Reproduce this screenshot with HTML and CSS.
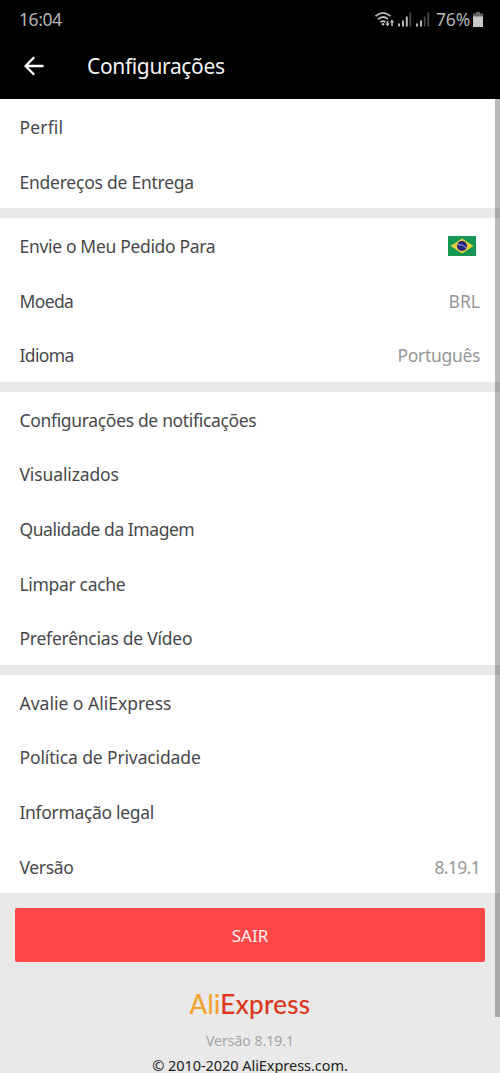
FILE: index.html
```html
<!DOCTYPE html>
<html lang="pt-BR">
<head>
<meta charset="utf-8">
<meta name="viewport" content="width=device-width, initial-scale=1">
<title>Configurações</title>
<link rel="stylesheet" href="styles.css">
</head>
<body>
<header class="top">
  <div class="status">
    <span class="clock">16:04</span>
    <div class="indicators">
      <svg class="wifi" width="20" height="17" viewBox="0 0 20 17" fill="none" stroke="#c0c0c0" stroke-width="1.7">
        <path d="M.5 5.200Q8 -1.600 15.500 5.200M3 8.300Q8 3.800 13 8.100M5.500 11.300Q8 9 10.300 11.300"/>
        <circle cx="8" cy="13.300" r="1.200" fill="#c0c0c0" stroke="none"/>
        <path d="M12.500 10v3M17 15v-4" stroke-width="1.500"/>
        <path d="M10.300 12.500h4.400l-2.200 3zM14.800 11.500h4.400L17 8.500z" fill="#c0c0c0" stroke="none"/>
      </svg>
      <svg class="signal" width="14" height="15" viewBox="0 0 14 15" fill="#b8b8b8">
        <path d="M0 11.500h2v3H0zM4 8.500h2v6H4zM7.800 4.500h2v10h-2z"/><path d="M11.400 .5h1.800v14h-1.800z" fill="#484848"/>
      </svg>
      <svg class="signal" width="14" height="15" viewBox="0 0 14 15" fill="#b8b8b8">
        <path d="M0 11.500h2v3H0zM4 8.500h2v6H4z"/><path d="M7.800 4.500h1.800v10H7.800zM11.400 .5h1.800v14h-1.800z" fill="#484848"/>
      </svg>
      <span class="percent">76%</span>
      <svg class="battery" width="10" height="15" viewBox="0 0 11 15" preserveAspectRatio="none">
        <path d="M3.300 0h4.400v1.500H11V5H0V1.500h3.300z" fill="#656565"/><path d="M0 4.500h11V15H0z" fill="#c8c8c8"/>
      </svg>
    </div>
  </div>
  <div class="bar">
    <svg class="back" width="20" height="20" viewBox="0 0 20 20" fill="none" stroke="#fff" stroke-width="2.300"><path d="M19.500 10H1.800M10.200 1.200L1.500 10l8.700 8.800"/></svg>
    <h1 class="title">Configurações</h1>
  </div>
</header>
<main class="content">
  <section class="group">
    <div class="row"><span class="wide">Perfil</span></div>
    <div class="row"><span class="snug">Endereços de Entrega</span></div>
  </section>
  <section class="group">
    <div class="row"><span class="tight">Envie o Meu Pedido Para</span>
      <svg class="flag" width="28" height="20" viewBox="0 0 28 20"><path fill="#159653" d="M0 0h28v20H0z"/><path fill="#e6cf3e" d="M14 2.500l11.500 7.500L14 17.500 2.500 10z"/><circle cx="14" cy="10" r="5" fill="#28247e"/><path d="M9.500 8.600Q14.500 7.800 18.500 12" fill="none" stroke="#b0b0d8" stroke-width="1"/></svg>
    </div>
    <div class="row"><span class="tightest">Moeda</span><span class="value">BRL</span></div>
    <div class="row"><span class="tightest">Idioma</span><span class="value tight">Português</span></div>
  </section>
  <section class="group">
    <div class="row"><span class="tight">Configurações de notificações</span></div>
    <div class="row"><span class="slight">Visualizados</span></div>
    <div class="row"><span class="tighter">Qualidade da Imagem</span></div>
    <div class="row"><span class="tight">Limpar cache</span></div>
    <div class="row"><span class="snug">Preferências de Vídeo</span></div>
  </section>
  <section class="group">
    <div class="row"><span>Avalie o AliExpress</span></div>
    <div class="row"><span class="slight">Política de Privacidade</span></div>
    <div class="row"><span class="tight">Informação legal</span></div>
    <div class="row"><span class="tight">Versão</span><span class="value number">8.19.1</span></div>
  </section>
  <button class="logout">SAIR</button>
  <footer class="footer">
    <div class="logo"><span class="ali">Ali</span>Express</div>
    <div class="version">Versão 8.19.1</div>
    <div class="copyright">© 2010-2020 AliExpress.com.</div>
  </footer>
  <div class="scrollbar"></div>
</main>
</body>
</html>
```
FILE: styles.css
```css
* { box-sizing: border-box; }
body {
  margin: 0;
  height: 1073px;
  overflow: hidden;
  background: #e9e9e9;
  color: #48484c;
  font-family: "Noto Sans", "Open Sans", sans-serif;
}
.top { height: 99px; background: #000; }
.status {
  height: 38px;
  padding: 0 17px 0 19px;
  display: flex;
  align-items: center;
  justify-content: space-between;
  color: #b5b5b5;
  font-size: 17.500px;
}
.clock { letter-spacing: -0.400px; }
.indicators { display: flex; align-items: center; }
.wifi { margin-right: 3px; }
.signal { margin-right: 4px; }
.percent { margin: 0 3px 0 2px; letter-spacing: -0.200px; }
.bar { display: flex; align-items: center; height: 55px; padding-left: 24px; gap: 43px; }
.title { margin: 1px 0 0; color: #f4f4f4; font-size: 21px; font-weight: 400; letter-spacing: -0.350px; }
.content { position: relative; height: 974px; }
.group { background: #fff; margin-bottom: 9.670px; }
.row {
  height: 54.670px;
  padding: 1.400px 20px 0 19.500px;
  display: flex;
  align-items: center;
  justify-content: space-between;
  font-size: 17.500px;
  white-space: nowrap;
}
.wide { letter-spacing: 0.150px; }
.slight { letter-spacing: -0.130px; }
.snug { letter-spacing: -0.240px; }
.tight { letter-spacing: -0.330px; }
.tighter { letter-spacing: -0.450px; }
.tightest { letter-spacing: -0.620px; }
.value { color: #97979a; }
.number { letter-spacing: -0.650px; }
.flag { margin-right: 4.500px; }
.logout {
  display: block;
  width: 470px;
  height: 54px;
  margin: 15px 0 0 15px;
  padding: 1px 0 0;
  border: 0;
  border-radius: 2px;
  background: #ff4747;
  color: #fff0f0;
  font: 17px "Noto Sans", sans-serif;
}
.footer { text-align: center; white-space: nowrap; }
.logo {
  margin-top: 26px;
  height: 36px;
  line-height: 33px;
  font-family: Lato, sans-serif;
  font-size: 26px;
  letter-spacing: 0.350px;
  color: #dc3519;
  -webkit-text-stroke: 0.200px currentColor;
}
.ali { color: #f4a12c; }
.version { height: 33px; line-height: 34px; color: #a5a5a5; font-size: 14px; }
.copyright { height: 16px; line-height: 17px; color: #222; font-size: 14.500px; letter-spacing: -0.050px; }
.scrollbar {
  position: absolute;
  top: 0;
  right: 0;
  width: 5px;
  height: 918px;
  background: rgba(0, 0, 0, 0.28);
}
```
